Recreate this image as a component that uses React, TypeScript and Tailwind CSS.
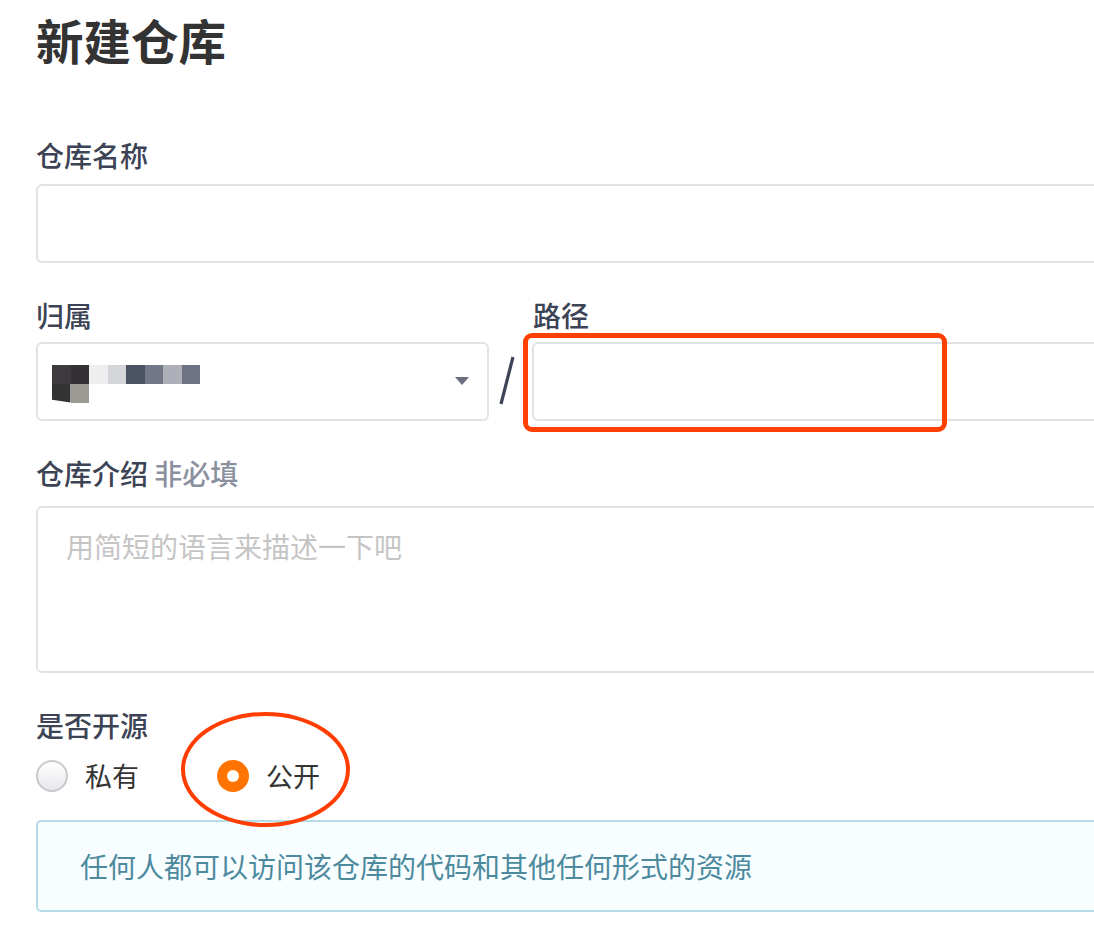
import type { ReactNode } from "react";

const FONT = { fontFamily: '"Noto Sans CJK SC", "Noto Sans", sans-serif' };

/* ── 打码头像 ───────────────────────────────── */
const PIXELS_TOP = ["#3e3a3d", "#333036", "#eeeeee", "#d4d5d8", "#4a5264", "#737888", "#adb0b8", "#6e7282"];

function PixelName() {
  return (
    <div className="flex flex-col">
      <div className="flex">
        {PIXELS_TOP.map((c, i) => (
          <div key={i} className="h-[19px] w-[18.5px]" style={{ backgroundColor: c }} />
        ))}
      </div>
      <div className="flex">
        <div className="h-[19px] w-[18.5px] bg-[#333333] [clip-path:polygon(0_0,100%_0,100%_100%,0_85%)]" />
        <div className="h-[19px] w-[18.5px] bg-[#9b9b94]" />
      </div>
    </div>
  );
}

function Label({ children, className = "" }: { children: ReactNode; className?: string }) {
  return <div className={`text-[28px] font-medium leading-none text-[#3c4355] ${className}`}>{children}</div>;
}

/* ── 单选 ───────────────────────────────────── */
function Radio({ checked, label }: { checked?: boolean; label: string }) {
  return (
    <div className="flex items-center">
      {checked ? (
        <div className="flex h-[32px] w-[32px] items-center justify-center rounded-full bg-[#ff7400]">
          <div className="h-[12px] w-[12px] rounded-full bg-white" />
        </div>
      ) : (
        <div className="h-[32px] w-[32px] rounded-full border-2 border-[#c9c9cc] bg-gradient-to-b from-white to-[#e6e7ec]" />
      )}
      <span className="ml-[17px] text-[27px] leading-none text-[#333]">{label}</span>
    </div>
  );
}

export default function App() {
  return (
    <div className="h-[942px] w-[1094px] overflow-hidden bg-white" style={FONT}>
      <div className="flex w-[1250px] flex-col pl-[36px]">
        {/* 标题 */}
        <h1 className="mt-[16px] text-[47.5px] font-bold leading-none text-[#333]">新建仓库</h1>

        {/* 仓库名称 */}
        <Label className="mt-[77px]">仓库名称</Label>
        <div className="mt-[15px] h-[79px] rounded-[6px] border-2 border-[#dfe3e8] bg-white" />

        {/* 归属 / 路径 */}
        <div className="mt-[38px] flex">
          <Label className="w-[497px]">归属</Label>
          <Label>路径</Label>
        </div>
        <div className="mt-[13px] flex h-[79px]">
          <div className="flex w-[453px] items-center rounded-[6px] border-2 border-[#dfe3e8] pl-[14px] pr-[18px]">
            <div className="pt-[5px]">
              <PixelName />
            </div>
            <svg className="ml-auto" width="14" height="9" viewBox="0 0 14 9" aria-hidden="true">
              <path d="M0 0h14L7 8z" fill="#6b7080" />
            </svg>
          </div>
          <div className="flex w-[43px] items-center justify-start pl-[9px]">
            <svg width="18" height="50" viewBox="0 0 18 50" aria-hidden="true">
              <path d="M15 1L3 48" stroke="#3d4458" strokeWidth="3.2" />
            </svg>
          </div>
          <div className="relative flex-1 rounded-[6px] border-2 border-[#dfe3e8]">
            <div className="absolute left-[-11px] top-[-11px] h-[99px] w-[424px] rounded-[9px] border-[5px] border-[#ff4000]" />
          </div>
        </div>

        {/* 仓库介绍 */}
        <Label className="mt-[38px]">
          仓库介绍 <span className="text-[#8b909f]">非必填</span>
        </Label>
        <div className="mt-[19px] h-[167px] rounded-[6px] border-2 border-[#dfe3e8] pl-[28px] pt-[24px]">
          <span className="text-[28px] leading-none text-[#c5c5c5]">用简短的语言来描述一下吧</span>
        </div>

        {/* 是否开源 */}
        <Label className="mt-[38px]">是否开源</Label>
        <div className="mt-[21px] flex items-center">
          <Radio label="私有" />
          <div className="relative ml-[78px]">
            <Radio checked label="公开" />
            <div className="absolute left-[-36px] top-[-48px] h-[115px] w-[169px] rounded-[50%] border-[4px] border-[#ff3d00]" />
          </div>
        </div>

        {/* 提示 */}
        <div className="mt-[28px] flex h-[92px] items-center rounded-[5px] border-2 border-[#b5dbe6] bg-[#f8feff] pl-[42px]">
          <span className="text-[28px] leading-none text-[#4d8a9e]">任何人都可以访问该仓库的代码和其他任何形式的资源</span>
        </div>
      </div>
    </div>
  );
}
